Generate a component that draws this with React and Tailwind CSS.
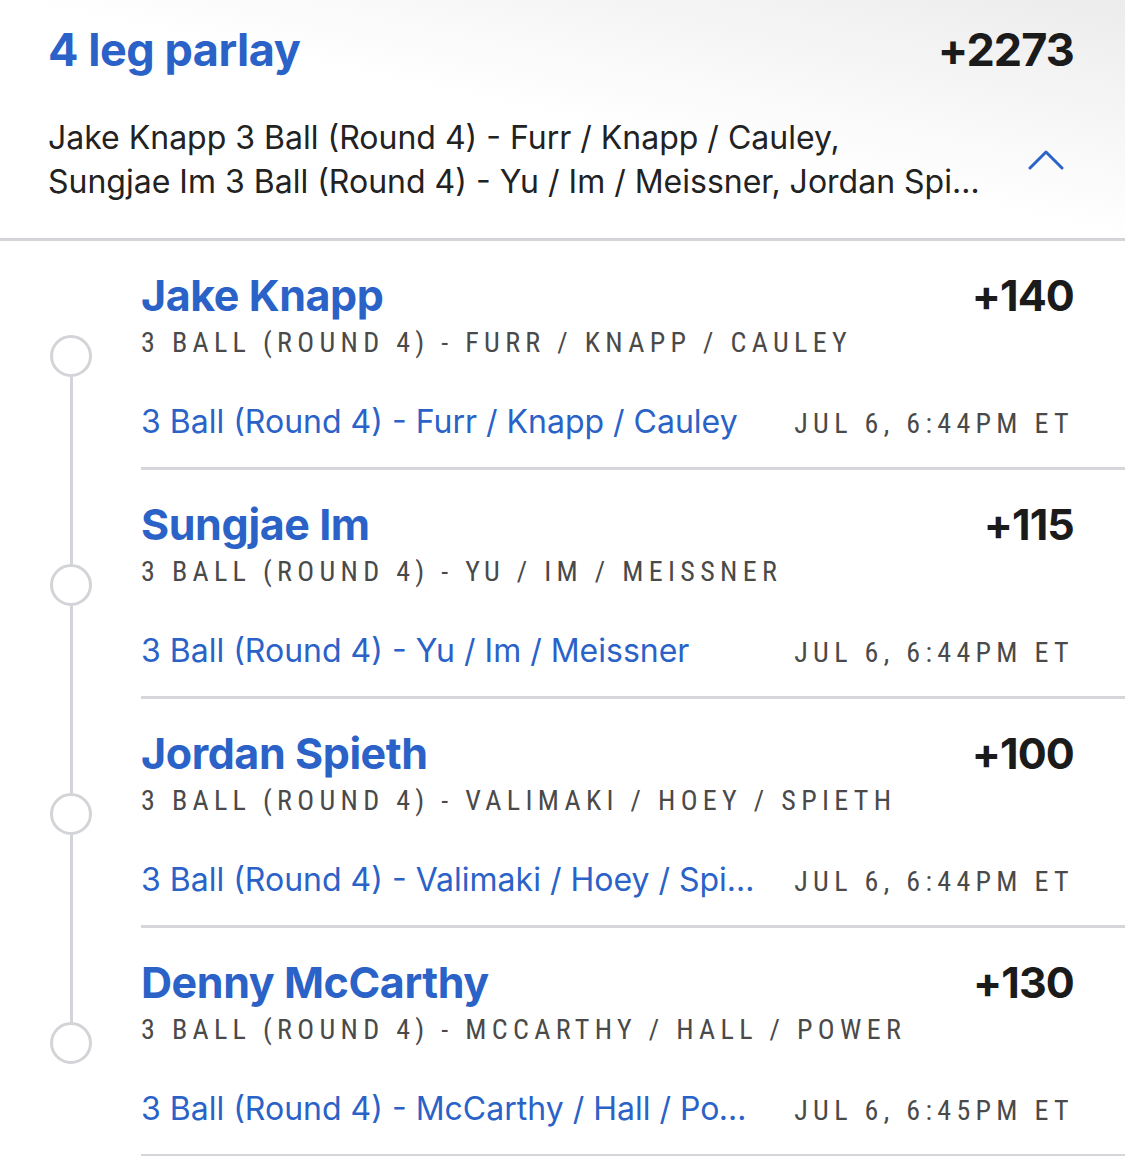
const legs = [
  {
    name: "Jake Knapp",
    odds: "+140",
    market: "3 Ball (Round 4) - Furr / Knapp / Cauley",
    time: "Jul 6, 6:44PM ET",
  },
  {
    name: "Sungjae Im",
    odds: "+115",
    market: "3 Ball (Round 4) - Yu / Im / Meissner",
    time: "Jul 6, 6:44PM ET",
  },
  {
    name: "Jordan Spieth",
    odds: "+100",
    market: "3 Ball (Round 4) - Valimaki / Hoey / Spieth",
    time: "Jul 6, 6:44PM ET",
  },
  {
    name: "Denny McCarthy",
    odds: "+130",
    market: "3 Ball (Round 4) - McCarthy / Hall / Power",
    time: "Jul 6, 6:45PM ET",
  },
];

const sans = "font-['Inter','Lato',sans-serif]";
const narrow = "font-['Roboto_Condensed','Roboto',sans-serif]";

function Leg({ leg, first, last }) {
  return (
    <div className="flex h-[229px]">
      {/* timeline rail */}
      <div className="w-[141px] shrink-0">
        <div className="ml-[50px] flex h-full w-[42px] flex-col items-center">
          <div className={`w-[3px] flex-1 ${first ? "" : "bg-[#d3d4d8]"}`} />
          <div className="h-[42px] w-[42px] shrink-0 rounded-full border-[3px] border-[#d3d4d8] bg-white" />
          <div className={`w-[3px] flex-1 ${last ? "" : "bg-[#d3d4d8]"}`} />
        </div>
      </div>

      <div className="min-w-0 flex-1 border-b-[3px] border-[#d5d6da] pr-[51px] pt-[30px]">
        <div className="flex items-baseline justify-between">
          <span className={`${sans} text-[43px] font-bold leading-[48px] tracking-[-0.01em] text-[#2a62c8]`}>
            {leg.name}
          </span>
          <span className={`${sans} text-[43px] font-bold leading-[48px] tracking-[-0.02em] text-[#1b1b1b]`}>
            {leg.odds}
          </span>
        </div>
        <div className={`${narrow} mt-[6px] text-[28px] uppercase leading-[36px] tracking-[0.19em] text-[#4a4a4a]`}>
          {leg.market}
        </div>
        <div className="mt-[39px] flex items-baseline gap-8">
          <span className={`${sans} min-w-0 flex-1 truncate text-[32px] leading-[44px] text-[#2a62c8]`}>
            {leg.market}
          </span>
          <span className={`${narrow} shrink-0 text-[28px] uppercase leading-[44px] tracking-[0.19em] text-[#4a4a4a]`}>
            {leg.time}
          </span>
        </div>
      </div>
    </div>
  );
}

export default function App() {
  const [head, ...rest] = legs.map((l) => `${l.name} ${l.market}`);

  return (
    <div className="min-h-[1156px] w-[1125px] bg-white">
      <header className="h-[241px] border-b-[3px] border-[#d3d4d8] bg-gradient-to-bl from-[#ececec] via-white to-white pl-12 pr-[51px] pt-[22px]">
        <div className="flex items-baseline justify-between">
          <h1 className={`${sans} text-[45px] font-bold leading-[56px] tracking-[-0.01em] text-[#2a62c8]`}>
            4 leg parlay
          </h1>
          <span className={`${sans} text-[45px] font-bold leading-[56px] tracking-[-0.02em] text-[#1b1b1b]`}>
            +2273
          </span>
        </div>
        <div className="mt-[38px] flex items-center justify-between">
          <div className={`${sans} w-[940px] text-[32px] leading-[44px] text-[#222]`}>
            <p>{head},</p>
            <p className="truncate">{rest.join(", ")}</p>
          </div>
          <svg width="36" height="20" viewBox="0 0 36 20" className="mr-[10px]" fill="none">
            <polyline points="2,18 18,2 34,18" stroke="#2a62c8" strokeWidth="3" strokeLinecap="round" strokeLinejoin="round" />
          </svg>
        </div>
      </header>

      <div>
        {legs.map((leg, i) => (
          <Leg key={leg.name} leg={leg} first={i === 0} last={i === legs.length - 1} />
        ))}
      </div>
    </div>
  );
}
